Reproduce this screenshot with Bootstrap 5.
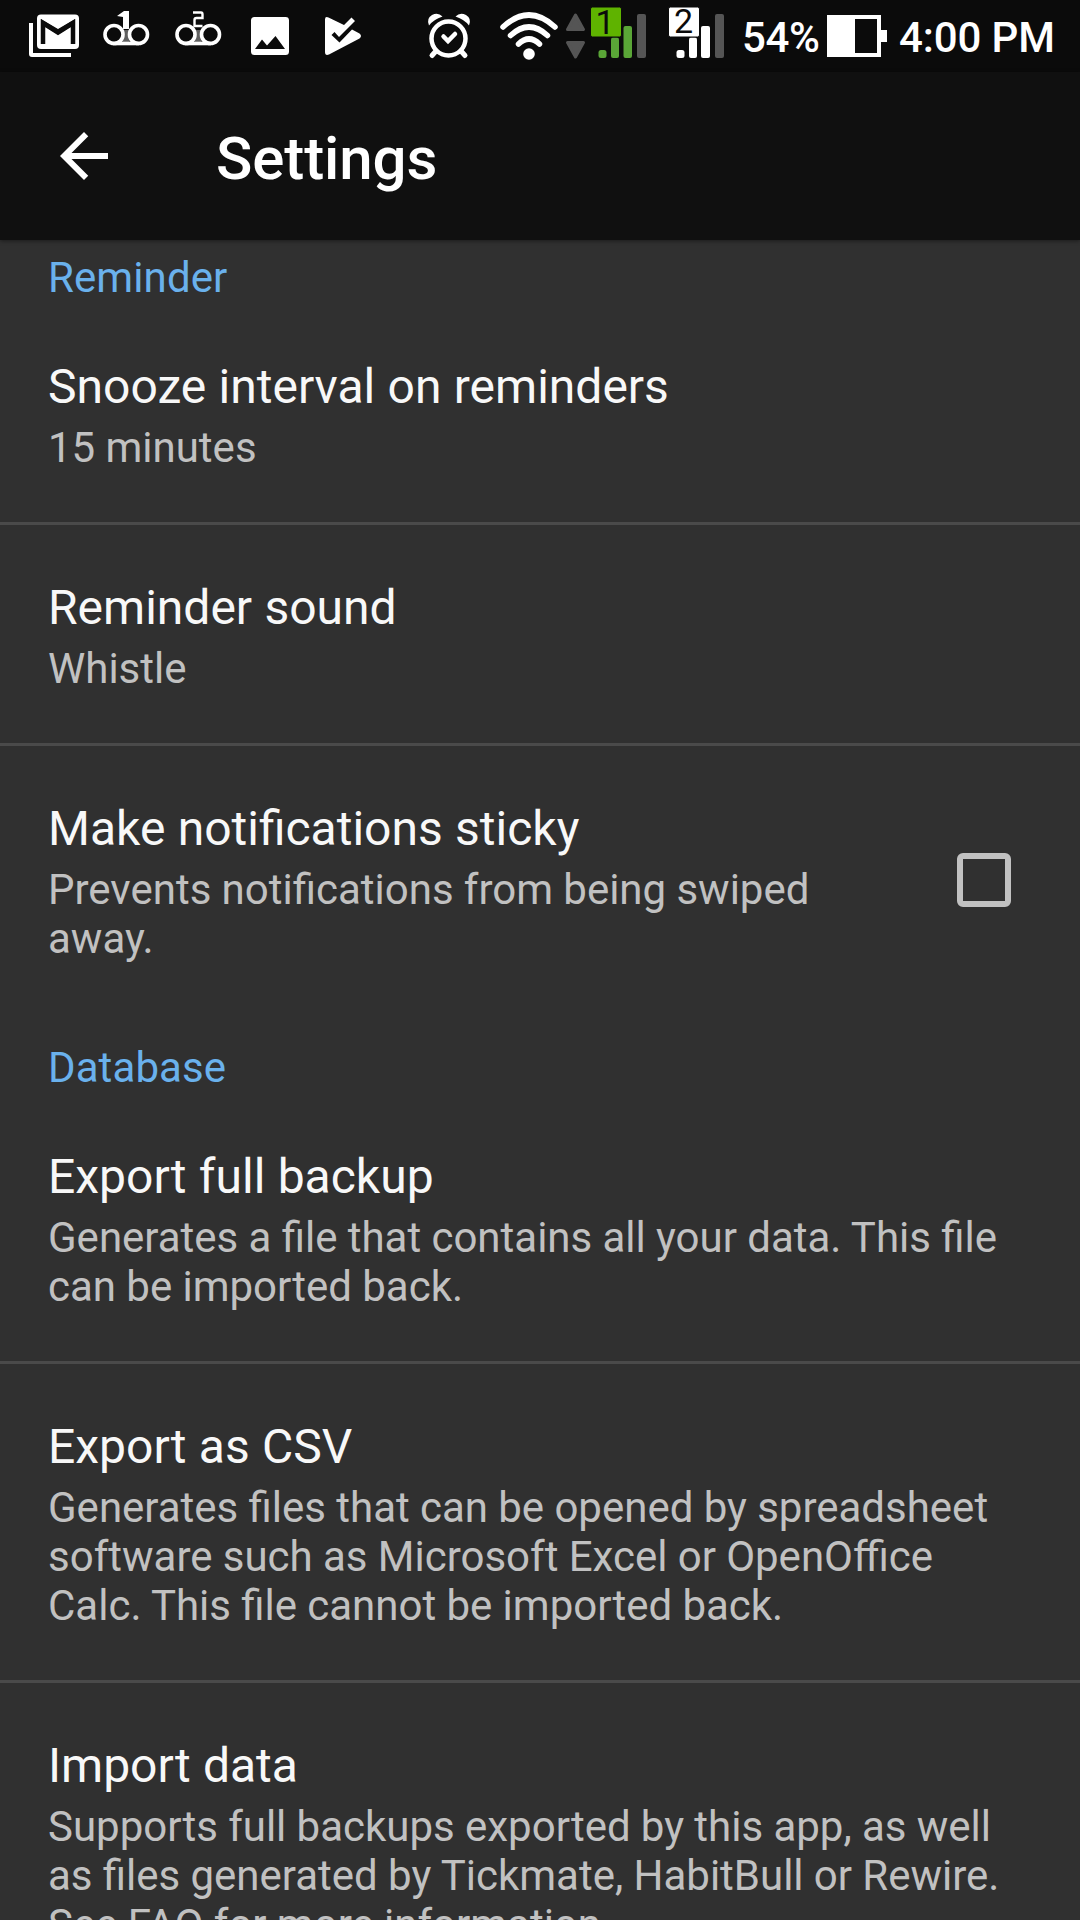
<!DOCTYPE html>
<html lang="en">
<head>
<meta charset="utf-8">
<meta name="viewport" content="width=device-width, initial-scale=1">
<title>Settings</title>
<link href="https://cdn.jsdelivr.net/npm/bootstrap@5.3.0/dist/css/bootstrap.min.css" rel="stylesheet">
<style>
  html, body { height: 1920px; overflow: hidden; }
  body { background: #303030; font-family: Roboto, sans-serif; color: #fff; }
  .screen { width: 1080px; height: 1920px; }
  .statusbar { height: 72px; background: #0b0b0b; }
  .statusbar svg { display: block; }
  .appbar { height: 168px; background: #101010; box-shadow: 0 1px 4px rgba(0,0,0,.45); padding-left: 48px; z-index: 1; }
  .appbar-title { font-size: 60px; font-weight: 500; line-height: 72px; letter-spacing: -.1px; margin: 6px 0 0 84px; }
  .back-btn { width: 84px; height: 72px; }
  .category { color: #6ab1ec; font-size: 42px; line-height: 49px; letter-spacing: .1px; padding: 30px 48px 2px; height: 81px; }
  .category.first { height: 64px; padding-top: 13px; }
  .pref { padding: 55px 48px 50px; background: transparent; color: inherit; border: 0; border-radius: 0; }
  .pref.ruled { border-bottom: 3px solid #4a4a4a; }
  .pref-title { font-size: 48px; line-height: 56px; color: #f8f8f8; white-space: nowrap; word-spacing: .4px; }
  .pref-note { font-size: 42px; line-height: 49px; color: #c1c1c1; margin-top: 8px; white-space: nowrap; word-spacing: -.15px; }
  .tick { width: 54px; height: 54px; margin: 0 21px 5px 0; border: 6px solid #c1c1c1; background: transparent; }
  .tick[type=checkbox] { border-radius: 6px; }
</style>
<script src="https://cdn.jsdelivr.net/npm/bootstrap@5.3.0/dist/js/bootstrap.bundle.min.js"></script>
</head>
<body>
<div class="screen d-flex flex-column overflow-hidden">
  <header class="statusbar flex-shrink-0">
    <svg width="1080" height="72" viewBox="0 0 1080 72" fill="#fff">
      <!-- mail -->
      <path d="M29 23h4v30h38v4H32a3 3 0 0 1-3-3z"/>
      <rect x="37" y="14.500" width="42" height="34.500" rx="4"/>
      <path d="M43 44V23l15 9.500L73 23v21" fill="none" stroke="#0b0b0b" stroke-width="4.500"/>
      <path d="M41 19v5l17 10.500L75 24v-5L58 29z" fill="#0b0b0b"/>
      <!-- voicemail, line 1 and line 2 -->
      <g fill="none" stroke="#fff" stroke-width="3.600">
        <circle cx="114" cy="34.500" r="9"/><circle cx="138.500" cy="34.500" r="9"/><path d="M113 43.500h26"/>
        <circle cx="186" cy="34.500" r="9"/><circle cx="210.500" cy="34.500" r="9"/><path d="M185 43.500h26"/>
      </g>
      <path d="M124 11h5v18h-6V17l-6-1z"/>
      <path d="M193 12.500h8q1.500 0 1.500 2v3.500h-6q-2 0-2 2v6h8" fill="none" stroke="#fff" stroke-width="2.400"/>
      <path d="M122 30l2 7-2 6h8l-2-6 2-7zM194 30l2 7-2 6h8l-2-6 2-7z" opacity=".35"/>
      <!-- picture -->
      <path fill-rule="evenodd" d="M254.500 17h31a3.500 3.500 0 0 1 3.500 3.500v31a3.500 3.500 0 0 1-3.500 3.500h-31a3.500 3.500 0 0 1-3.500-3.500v-31a3.500 3.500 0 0 1 3.500-3.500zM255 49h30l-9.500-13-8.500 9.500-5-6z"/>
      <!-- play check -->
      <path d="M325 19.500q0-3.500 3.500-2L344 25l7.500-7.500 3.500 3.500-16 16-4.500-5-3 3 8 7.500 12.500-13 7.500 4q3 2.500 0 5L329 54.500q-4 1.500-4-2.500z"/>
      <!-- alarm -->
      <g fill="none" stroke="#fff">
        <circle cx="448.500" cy="38.500" r="17" stroke-width="4.500"/>
        <path d="M443.500 36.500l4.500 4.500 7-7" stroke-width="4.500" stroke-linecap="round"/>
        <path d="M436 51l-4 4.500M461 51l4 4.500" stroke-width="5" stroke-linecap="round"/>
      </g>
      <path d="M429 25.500q-3-7 3-10.500 6-3 10.500 1.500-9 3-13.500 9zM469 25.500q3-7-3-10.500-6-3-10.500 1.500 9 3 13.500 9z"/>
      <!-- wifi -->
      <g fill="none" stroke="#fff" stroke-width="5.500" stroke-linecap="round">
        <path d="M503 27Q529 3 555 27M510.500 35.500Q529 18.500 547.500 35.500M518.500 44Q529 34 539.500 44"/>
      </g>
      <circle cx="529" cy="54" r="5.800"/>
      <g fill="#555" stroke="#555" stroke-width="3" stroke-linejoin="round"><path d="M575.500 15l8 14.500h-16zM575.500 57l8-14.500h-16z"/></g>
      <!-- signal, SIM 1 -->
      <g fill="#5aa637"><rect x="598.500" y="50" width="8" height="8" rx="2.500"/><rect x="611" y="37.500" width="8" height="20.500" rx="2"/><rect x="623.500" y="26" width="8.500" height="32" rx="2"/></g>
      <rect x="637" y="14" width="9" height="44" rx="2" fill="#555"/>
      <rect x="590.500" y="7" width="31" height="30" rx="2" fill="#5fb300" stroke="#0b0b0b" stroke-width="1"/>
      <!-- signal, SIM 2 -->
      <rect x="676.500" y="50" width="8" height="8" rx="2.500"/><rect x="689" y="37.500" width="8" height="20.500" rx="2"/><rect x="701" y="26" width="9" height="32" rx="2"/>
      <rect x="715" y="14" width="9" height="44" rx="2" fill="#555"/>
      <rect x="668.500" y="7" width="31" height="30" rx="2" stroke="#0b0b0b" stroke-width="1"/>
      <g fill="#0b0b0b" font-family="Roboto, sans-serif" font-size="34"><text x="595.500" y="34">1</text><text x="674" y="33">2</text></g>
      <!-- battery -->
      <path fill-rule="evenodd" d="M827 15h54v15h6v12h-6v15h-54zM855 19v34h22V19z"/>
      <g font-family="Roboto, sans-serif" font-size="42" font-weight="500"><text x="742" y="52" textLength="78">54%</text><text x="899" y="52" textLength="156">4:00 PM</text></g>
    </svg>
  </header>

  <nav class="appbar d-flex align-items-center position-relative flex-shrink-0">
    <a href="#" class="back-btn d-flex align-items-center" aria-label="Back">
      <svg width="72" height="72" viewBox="0 0 24 24" fill="#fff"><path d="M20 11H7.830l5.590-5.590L12 4l-8 8 8 8 1.410-1.410L7.830 13H20v-2z"/></svg>
    </a>
    <h1 class="appbar-title">Settings</h1>
  </nav>

  <main>
    <h2 class="category first m-0 fw-normal">Reminder</h2>
    <div class="list-group list-group-flush">
      <div class="list-group-item pref ruled">
        <div class="pref-title">Snooze interval on reminders</div>
        <div class="pref-note">15 minutes</div>
      </div>
      <div class="list-group-item pref ruled">
        <div class="pref-title">Reminder sound</div>
        <div class="pref-note">Whistle</div>
      </div>
      <label class="list-group-item pref d-flex align-items-center justify-content-between">
        <span>
          <span class="pref-title d-block">Make notifications sticky</span>
          <span class="pref-note d-block">Prevents notifications from being swiped<br>away.</span>
        </span>
        <input class="form-check-input tick" type="checkbox" aria-label="Make notifications sticky">
      </label>
    </div>

    <h2 class="category m-0 fw-normal">Database</h2>
    <div class="list-group list-group-flush">
      <div class="list-group-item pref ruled">
        <div class="pref-title">Export full backup</div>
        <div class="pref-note">Generates a file that contains all your data. This file<br>can be imported back.</div>
      </div>
      <div class="list-group-item pref ruled">
        <div class="pref-title">Export as CSV</div>
        <div class="pref-note">Generates files that can be opened by spreadsheet<br>software such as Microsoft Excel or OpenOffice<br>Calc. This file cannot be imported back.</div>
      </div>
      <div class="list-group-item pref">
        <div class="pref-title">Import data</div>
        <div class="pref-note">Supports full backups exported by this app, as well<br>as files generated by Tickmate, HabitBull or Rewire.<br>See FAQ for more information.</div>
      </div>
    </div>
  </main>
</div>
</body>
</html>
